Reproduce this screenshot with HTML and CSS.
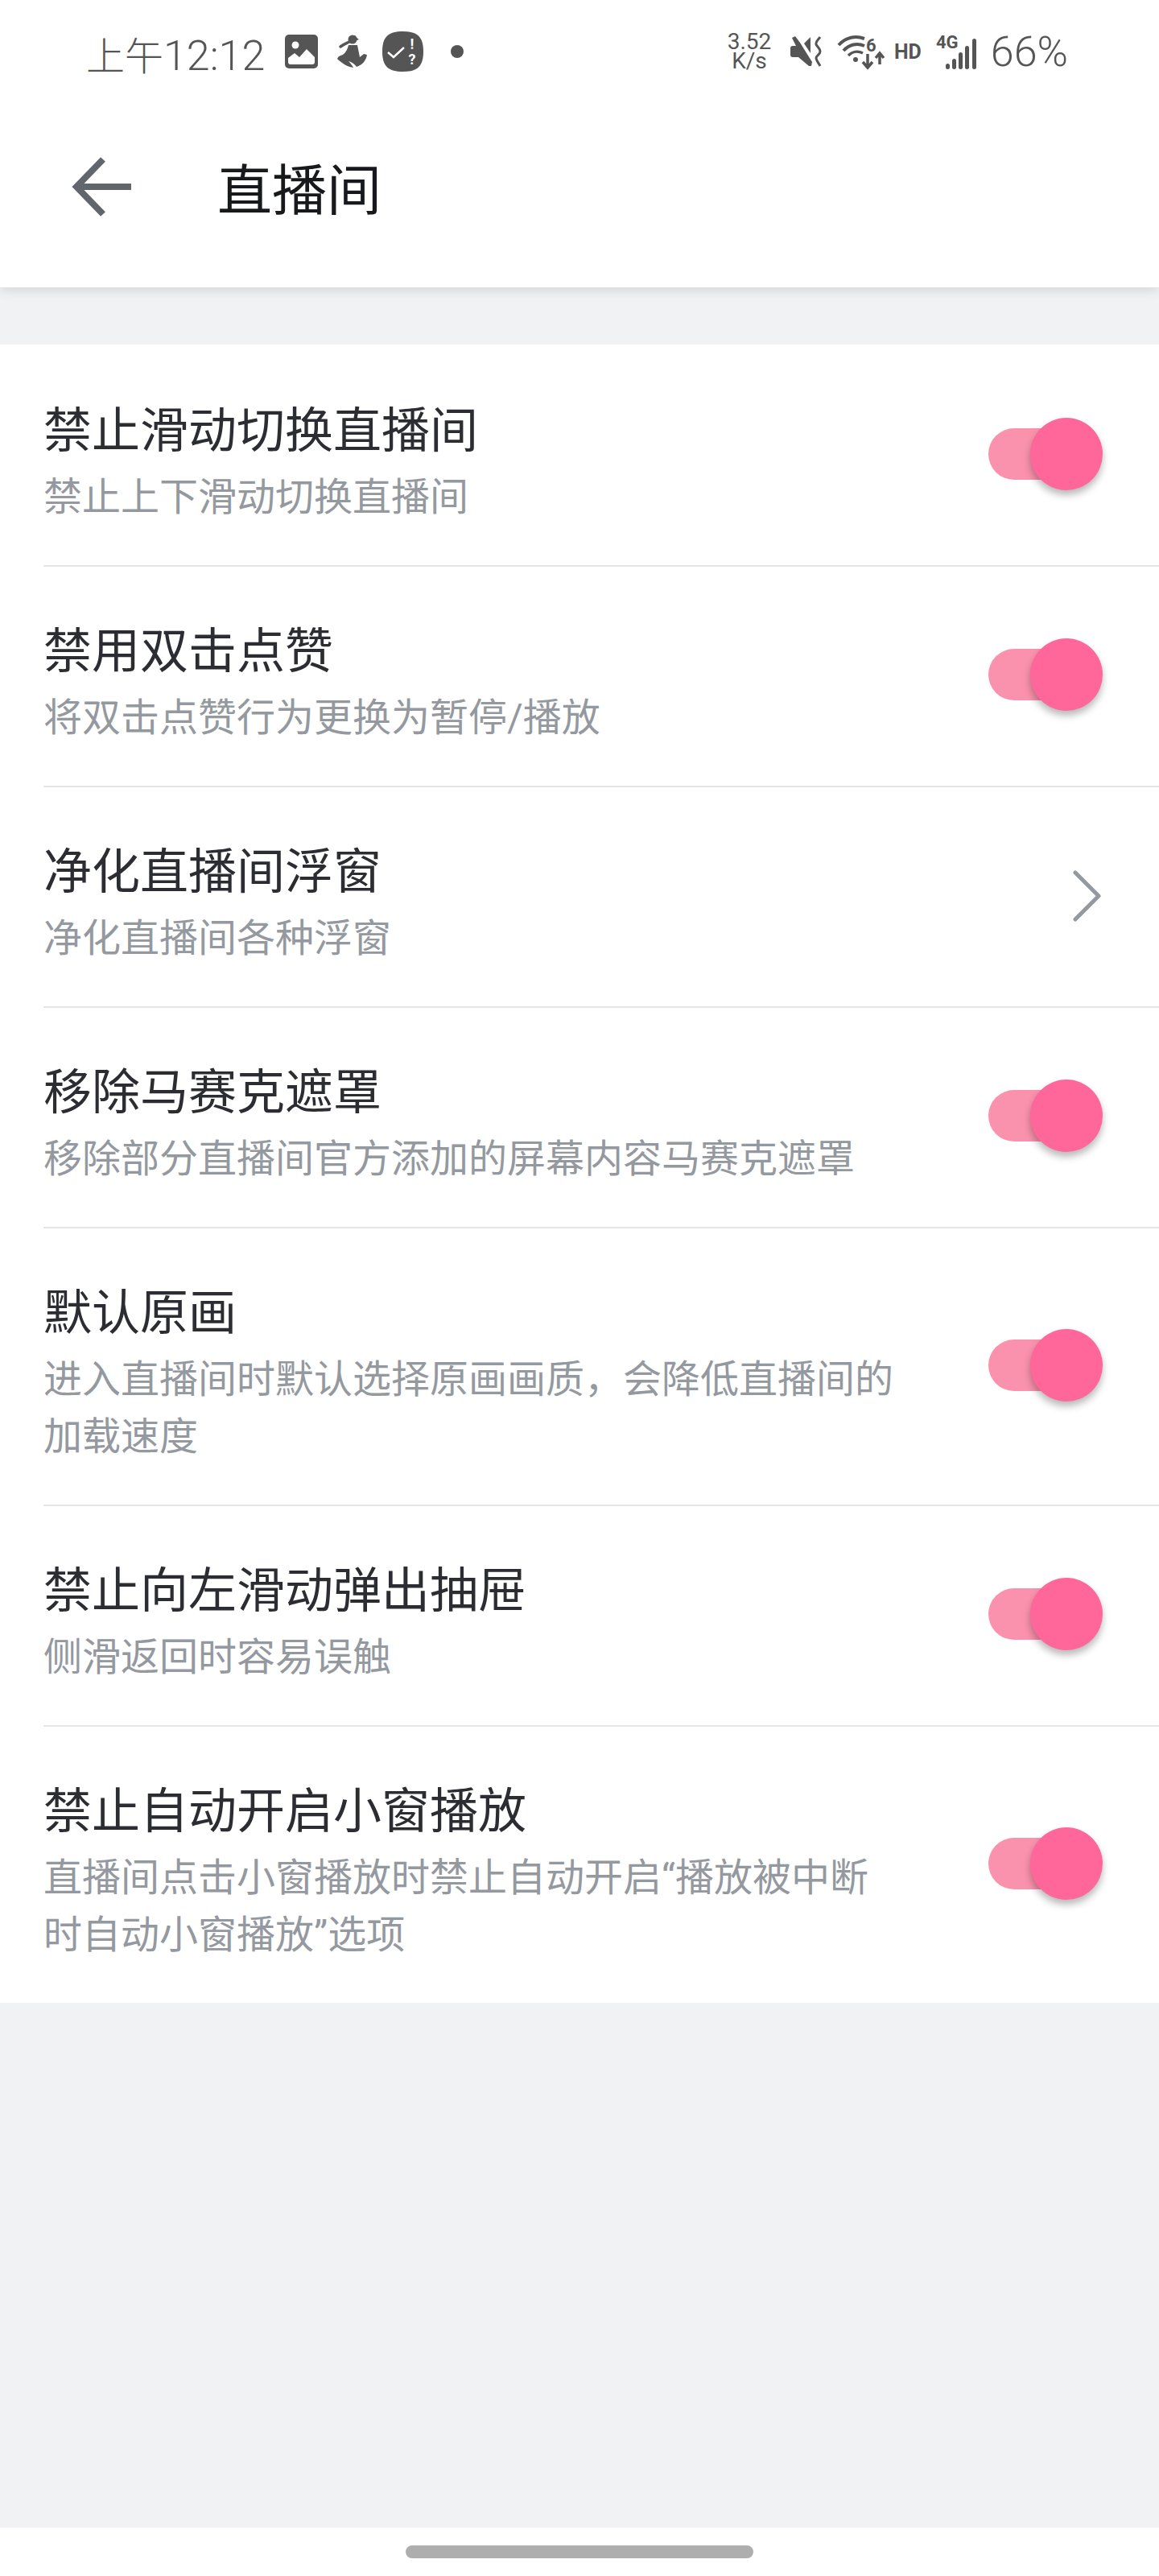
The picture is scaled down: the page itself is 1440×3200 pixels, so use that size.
FILE: index.html
```html
<!DOCTYPE html>
<html lang="zh-CN">
<head>
    <meta charset="UTF-8">
    <meta name="viewport" content="width=device-width, initial-scale=1.0">
    <title>直播间</title>
    <link rel="stylesheet" href="styles.css">
</head>
<body>
    <header class="header">
        <div class="status">
            <div class="status-left">
                <span class="time"><span class="time-cjk">上午</span>12:12</span>
                <svg class="ic-pic" width="41" height="42" viewBox="0 0 41 42">
                    <rect width="41" height="42" rx="5" fill="#555"/>
                    <circle cx="13" cy="13" r="4.5" fill="#fff"/>
                    <path d="M4 29l8-6 6 5 9-10 10 10v6a3 3 0 0 1-3 3H7a3 3 0 0 1-3-3z" fill="#fff"/>
                </svg>
                <svg class="ic-person" width="37" height="42" viewBox="0 0 37 42">
                    <circle cx="19" cy="6" r="5.500" fill="#555"/>
                    <path d="M19 1h3c2 2 3 4 5 5l-5 2z" fill="#555"/>
                    <path d="M15 9c-4 2-7 3-11 6" stroke="#555" stroke-width="3.500" stroke-linecap="round" fill="none"/>
                    <path d="M14 13h11c1 5 2 10 3 15l5-4 4 1c-1 7-6 13-13 15-2-3-6-6-10-7 3 3 5 6 6 8-7-1-14-5-20-11 1-3 4-4 7-5 4-3 6-8 7-12z" fill="#555"/>
                </svg>
                <svg class="ic-badge" width="51" height="50" viewBox="0 0 51 50">
                    <path d="M25.5 0C43 0 51 6 51 25S43 50 25.500 50 0 44 0 25 8 0 25.500 0z" fill="#555"/>
                    <path d="M7 26l7 6 13-12" stroke="#fff" stroke-width="2.500" fill="none"/>
                    <text x="37" y="22" class="badge-mark">!</text>
                    <text x="37" y="41" class="badge-mark">?</text>
                </svg>
                <span class="dot"></span>
            </div>
            <div class="status-right">
                <span class="speed"><span>3.52</span><span>K/s</span></span>
                <svg class="ic-mute" width="40" height="38" viewBox="0 0 40 38">
                    <path d="M2 2l4-2 6 8 15 24-1 5h-3L10 26H3a3 3 0 0 1-3-3v-8a3 3 0 0 1 3-3h4z" fill="#555"/>
                    <path d="M17 9l8-8v20z" fill="#555"/>
                    <path d="M37 1c-3 4-6 6-5 9s5 5 5 9-5 5-5 8 3 6 5 10" stroke="#555" stroke-width="3" fill="none"/>
                </svg>
                <svg class="ic-wifi" width="57" height="41" viewBox="0 0 57 41">
                    <path d="M1 12C10 2 22 0 33 4" stroke="#555" stroke-width="4" fill="none"/>
                    <path d="M7 19c7-8 17-10 26-6" stroke="#555" stroke-width="4" fill="none"/>
                    <path d="M13 25c5-5 12-6 18-3" stroke="#555" stroke-width="3.500" fill="none"/>
                    <circle cx="22" cy="30" r="3" fill="#555"/>
                    <text x="35" y="20" class="wifi-six">6</text>
                    <path d="M37 23v16m-6-6l6 7 6-7M52 36V23m-5 5l5-6 5 6" stroke="#555" stroke-width="3.500" fill="none"/>
                </svg>
                <span class="hd">HD</span>
                <svg class="ic-signal" width="52" height="43" viewBox="0 0 52 43">
                    <text x="1" y="17" class="signal-label">4G</text>
                    <rect x="13" y="36" width="5" height="7" rx="2.500" fill="#555"/>
                    <rect x="21" y="30" width="5" height="13" rx="2.500" fill="#555"/>
                    <rect x="29" y="22" width="5" height="21" rx="2.500" fill="#555"/>
                    <rect x="37" y="14" width="5" height="29" rx="2.500" fill="#555"/>
                    <rect x="46" y="5" width="5" height="38" rx="2.500" fill="#555"/>
                </svg>
                <span class="battery">66%</span>
            </div>
        </div>
        <div class="toolbar">
            <svg class="back" width="74" height="74" viewBox="0 0 74 74">
                <path d="M39 3L6 37l33 34M6 37h68" stroke="#61666d" stroke-width="8" fill="none"/>
            </svg>
            <h1 class="page-title">直播间</h1>
        </div>
    </header>

    <main class="list">
        <div class="row">
            <div class="row-text">
                <div class="row-title">禁止滑动切换直播间</div>
                <div class="row-sub">禁止上下滑动切换直播间</div>
            </div>
            <div class="switch"><span class="thumb"></span></div>
        </div>
        <div class="row">
            <div class="row-text">
                <div class="row-title">禁用双击点赞</div>
                <div class="row-sub">将双击点赞行为更换为暂停/播放</div>
            </div>
            <div class="switch"><span class="thumb"></span></div>
        </div>
        <div class="row">
            <div class="row-text">
                <div class="row-title">净化直播间浮窗</div>
                <div class="row-sub">净化直播间各种浮窗</div>
            </div>
            <svg class="chevron" width="36" height="64" viewBox="0 0 36 64">
                <path d="M4 3l29 29L4 61" stroke="#9499a0" stroke-width="5" stroke-linecap="round" stroke-linejoin="round" fill="none"/>
            </svg>
        </div>
        <div class="row">
            <div class="row-text">
                <div class="row-title">移除马赛克遮罩</div>
                <div class="row-sub">移除部分直播间官方添加的屏幕内容马赛克遮罩</div>
            </div>
            <div class="switch"><span class="thumb"></span></div>
        </div>
        <div class="row">
            <div class="row-text">
                <div class="row-title">默认原画</div>
                <div class="row-sub">进入直播间时默认选择原画画质，会降低直播间的加载速度</div>
            </div>
            <div class="switch"><span class="thumb"></span></div>
        </div>
        <div class="row">
            <div class="row-text">
                <div class="row-title">禁止向左滑动弹出抽屉</div>
                <div class="row-sub">侧滑返回时容易误触</div>
            </div>
            <div class="switch"><span class="thumb"></span></div>
        </div>
        <div class="row">
            <div class="row-text">
                <div class="row-title">禁止自动开启小窗播放</div>
                <div class="row-sub">直播间点击小窗播放时禁止自动开启“播放被中断时自动小窗播放”选项</div>
            </div>
            <div class="switch"><span class="thumb"></span></div>
        </div>
    </main>

    <div class="spacer"></div>
    <footer class="navbar"><span class="pill"></span></footer>
</body>
</html>
```
FILE: styles.css
```css
* {
    box-sizing: border-box;
}
html, body {
    height: 100%;
}
body {
    margin: 0;
    height: 3200px;
    display: flex;
    flex-direction: column;
    background: #f1f2f3;
    color: #18191c;
    font-family: "Noto Sans CJK SC", "Noto Sans", sans-serif;
}

/* header */
.header {
    height: 357px;
    background: #fff;
    box-shadow: 0 3px 14px rgba(0, 0, 0, 0.13);
    position: relative;
}
.status {
    height: 135px;
    display: flex;
    justify-content: space-between;
    align-items: center;
    padding: 0 113px 7px 107px;
    color: #555;
    font-family: Roboto, sans-serif;
    font-weight: 300;
}
.status svg {
    overflow: visible;
}
.status-left, .status-right {
    display: flex;
    align-items: center;
}
.time {
    font-size: 52px;
    line-height: 60px;
    margin: 8px 25px 0 0;
}
.time-cjk {
    font-family: "Noto Sans CJK SC", sans-serif;
    font-size: 48px;
}
.ic-person {
    margin: 0 19px 0 24px;
}
.dot {
    width: 16px;
    height: 16px;
    border-radius: 50%;
    background: #555;
    margin-left: 34px;
}
.badge-mark {
    font: 700 18px Roboto, sans-serif;
    fill: #fff;
    text-anchor: middle;
}
.speed {
    display: flex;
    flex-direction: column;
    align-items: center;
    width: 54px;
    font-size: 28px;
    line-height: 24px;
    font-weight: 400;
    white-space: nowrap;
    margin-right: 24px;
}
.ic-mute {
    margin-right: 19px;
}
.ic-wifi {
    margin-right: 13px;
}
.wifi-six {
    font: 700 22px Roboto, sans-serif;
    fill: #555;
}
.hd {
    font-size: 25px;
    font-weight: 700;
    margin-right: 17px;
}
.signal-label {
    font: 700 22px Roboto, sans-serif;
    fill: #555;
}
.ic-signal {
    margin-right: 17px;
}
.battery {
    font-size: 52px;
    line-height: 60px;
    margin-top: 2px;
}
.toolbar {
    height: 222px;
    display: flex;
    align-items: center;
    padding: 0 0 28px 89px;
}
.back {
    margin-right: 107px;
}
.page-title {
    margin: 0 0 2px;
    font-size: 68px;
    font-weight: 400;
}

/* list */
.list {
    margin-top: 71px;
    padding-top: 2px;
    background: #fff;
}
.row {
    margin-left: 54px;
    padding-right: 100px;
    display: flex;
    justify-content: space-between;
    align-items: center;
    border-bottom: 2px solid #e3e5e7;
}
.row:last-child {
    border-bottom: none;
}
.row-text {
    width: 1071px;
    padding: 53px 0 49px;
}
.row-title {
    font-size: 60px;
    line-height: 94px;
    color: #2b2d32;
}
.row-sub {
    margin-top: 5px;
    font-family: Roboto, "Noto Sans CJK SC", sans-serif;
    font-size: 48px;
    line-height: 71px;
    color: #9499a0;
}
.switch {
    position: relative;
    width: 112px;
    height: 64px;
    margin-bottom: 4px;
    border-radius: 32px;
    background: #fa92ad;
}
.thumb {
    position: absolute;
    top: -13px;
    right: -30px;
    width: 90px;
    height: 90px;
    border-radius: 50%;
    background: #ff6699;
    box-shadow: 0 6px 10px rgba(0, 0, 0, 0.28);
}
.chevron {
    margin: 0 -28px 2px 0;
}

/* bottom */
.spacer {
    flex: 1;
}
.navbar {
    height: 60px;
    background: #fff;
    display: flex;
    justify-content: center;
    padding-top: 22px;
}
.pill {
    width: 432px;
    height: 16px;
    border-radius: 8px;
    background: #aeaeae;
}
```
